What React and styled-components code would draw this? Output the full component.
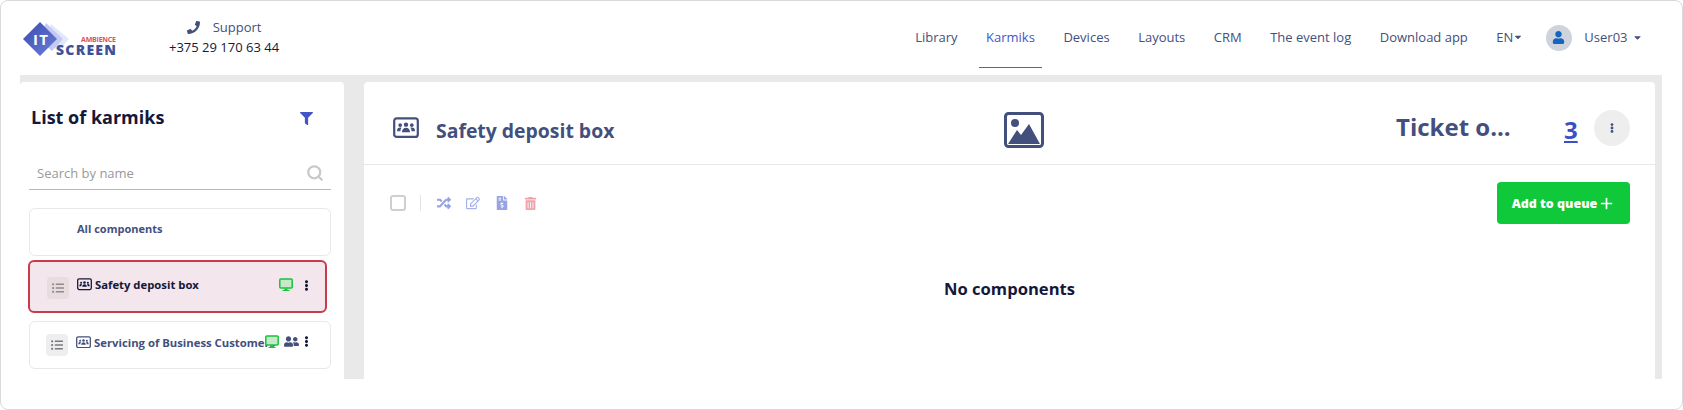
import React from "react";
import styled, { createGlobalStyle } from "styled-components";
import {
  FaPhone, FaFilter, FaRandom, FaRegEdit, FaFileInvoiceDollar, FaTrashAlt,
  FaUserFriends, FaListUl, FaUser, FaEllipsisV, FaCaretDown,
} from "react-icons/fa";
import { FiSearch, FiPlus } from "react-icons/fi";

const navy = "#434f7d";
const ink = "#14183a";
const font = '"Open Sans", "Noto Sans", sans-serif';

const Global = createGlobalStyle`
  html, body { margin: 0; padding: 0; background: #fff; }
  body { font-family: ${font}; color: ${ink}; }
  * { box-sizing: border-box; }
`;

const Logo = () => (
  <LogoSvg viewBox="0 0 96 40" width="96" height="40">
    <defs>
      <linearGradient id="dia" x1="0" y1="0" x2="1" y2="1">
        <stop offset="0" stopColor="#3b4bb0" />
        <stop offset="1" stopColor="#6b7fd8" />
      </linearGradient>
    </defs>
    <path d="M29 3 L47 18 L36 30 L22 18 Z" fill="#e3e7fa" />
    <path d="M24 2 L41 18 L30 30 L16 18 Z" fill="#c3cbf2" />
    <path d="M18 1 L35 18 L18 35 L1 18 Z" fill="url(#dia)" />
    <text x="11" y="24" fontSize="15" fontWeight="700" fill="#fff" fontFamily="Open Sans" textLength="15">IT</text>
    <text x="59" y="21" fontSize="7" fontWeight="700" fill="#d9505f" fontFamily="Open Sans" textLength="35">AMBIENCE</text>
    <text x="34" y="34" fontSize="14" fontWeight="800" fill="#3f5199" fontFamily="Open Sans" textLength="60">SCREEN</text>
  </LogoSvg>
);

const BoardIcon = ({ size = 15, color = navy }) => (
  <svg width={size} height={size * 0.82} viewBox="0 0 26 21" fill="none">
    <rect x="1.2" y="1.2" width="23.6" height="18.6" rx="2.5" stroke={color} strokeWidth="2.2" />
    <circle cx="13" cy="7.5" r="2.2" fill={color} />
    <circle cx="7.2" cy="8" r="1.8" fill={color} />
    <circle cx="18.8" cy="8" r="1.8" fill={color} />
    <path d="M9 15c0-3 1.6-4.5 4-4.5s4 1.500 4 4.500z" fill={color} />
    <path d="M4 14c0-2.500 1.200-3.600 3.200-3.600.6 0 1 .1 1.400.3C7.800 11.600 7.500 12.700 7.500 14zM22 14c0-2.500-1.200-3.600-3.200-3.600-.6 0-1 .1-1.400.3.800.9 1.100 2 1.100 3.300z" fill={color} />
  </svg>
);

const MonitorIcon = () => (
  <svg width="14" height="14" viewBox="0 0 14 14" fill="none">
    <rect x="0.8" y="1" width="12.4" height="9" rx="1" fill="#c9e8cb" stroke="#17c43a" strokeWidth="1.5" />
    <path d="M5.500 10.500h3v1.500h2v1H3.500v-1h2z" fill="#17c43a" />
  </svg>
);

const PictureIcon = () => (
  <svg width="40" height="36" viewBox="0 0 40 36" fill="none">
    <rect x="1.500" y="1.500" width="37" height="33" rx="3" fill="#fff" stroke={navy} strokeWidth="3" />
    <circle cx="11" cy="11" r="4" fill={navy} />
    <path d="M4 32 L13 18 L17 23 L25 12 L36 32 Z" fill={navy} />
  </svg>
);

const cards = [
  { id: 1, name: "Safety deposit box", active: true },
  { id: 2, name: "Servicing of Business Customers", users: true },
];

const navItems = ["Library", "Karmiks", "Devices", "Layouts", "CRM", "The event log", "Download app"];

export default function App() {
  return (
    <Frame>
      <Global />
      <Header>
        <Logo />
        <Support>
          <SupportRow>
            <PhoneIcon />
            <span>Support</span>
          </SupportRow>
          <PhoneNumber>+375 29 170 63 44</PhoneNumber>
        </Support>
        <Nav>
          {navItems.map((item) => (
            <NavItem key={item} $active={item === "Karmiks"}>{item}</NavItem>
          ))}
          <Lang>EN<FaCaretDown size={10} /></Lang>
          <Avatar><FaUser size={13} color="#1565c0" /></Avatar>
          <UserName>User03</UserName>
          <UserCaret size={11} color={navy} />
        </Nav>
      </Header>
      <Workspace>
        <Sidebar>
          <SideTitleRow>
            <SideTitle>List of karmiks</SideTitle>
            <FilterIcon size={13} color="#4355c7" />
          </SideTitleRow>
          <SearchBox>
            <SearchInput placeholder="Search by name" />
            <FiSearch size={18} color="#c8c8c8" strokeWidth={3} />
          </SearchBox>
          <AllCard>All components</AllCard>
          {cards.map((card) => (
            <Card key={card.id} $active={card.active}>
              <Handle $active={card.active}>
                <FaListUl size={12} color={card.active ? "#8f8a8f" : "#77797f"} />
              </Handle>
              <BoardIcon color={card.active ? ink : navy} />
              <CardName $active={card.active}>{card.name}</CardName>
              <CardIcons $wide={card.users}>
                <MonitorIcon />
                {card.users && <FaUserFriends size={15} color={navy} />}
                <Dots $wide={card.users}><FaEllipsisV size={11} color={ink} /></Dots>
              </CardIcons>
            </Card>
          ))}
        </Sidebar>
        <Main>
          <MainHead>
            <TitleBlock>
              <BoardIcon size={26} />
              <Title>Safety deposit box</Title>
            </TitleBlock>
            <ImageSlot><PictureIcon /></ImageSlot>
            <Ticket>Ticket o...</Ticket>
            <Count href="#">3</Count>
            <RoundButton><FaEllipsisV size={10} color={navy} /></RoundButton>
          </MainHead>
          <Toolbar>
            <Check />
            <Divider />
            <ToolIcons>
              <FaRandom size={14} color="#98a3e2" />
              <FaRegEdit size={14} color="#a9b2e8" />
              <FaFileInvoiceDollar size={14} color="#98a3e2" />
              <FaTrashAlt size={13} color="#f2a0aa" />
            </ToolIcons>
            <AddButton>Add to queue <FiPlus size={17} strokeWidth={2.4} /></AddButton>
          </Toolbar>
          <Empty>No components</Empty>
        </Main>
      </Workspace>
    </Frame>
  );
}

const Frame = styled.div`
  width: 1683px;
  height: 410px;
  border: 1px solid #d9d9d9;
  border-radius: 8px;
  overflow: hidden;
  background: #fff;
`;

const Header = styled.header`
  height: 74px;
  display: flex;
  align-items: flex-start;
  padding: 0 39px 0 21px;
`;

const LogoSvg = styled.svg`
  margin-top: 20px;
  flex: none;
`;

const Support = styled.div`
  margin-left: 51px;
  margin-top: 16px;
  display: flex;
  flex-direction: column;
  align-items: center;
`;

const SupportRow = styled.div`
  display: flex;
  align-items: center;
  gap: 13px;
  font-size: 13px;
  line-height: 20px;
  color: ${navy};
`;

const PhoneIcon = styled(FaPhone)`
  width: 13px;
  height: 13px;
  color: ${navy};
`;

const PhoneNumber = styled.div`
  font-size: 13px;
  line-height: 20px;
  color: ${ink};
`;

const Nav = styled.nav`
  margin-left: auto;
  height: 67px;
  display: flex;
  align-items: center;
  gap: 14.5px;
  font-size: 13px;
  color: ${navy};
`;

const NavItem = styled.a`
  height: 67px;
  padding: 5px 7px 0;
  display: flex;
  align-items: center;
  color: ${(p) => (p.$active ? "#4355c7" : navy)};
  border-bottom: 1px solid ${(p) => (p.$active ? "#c93a4b" : "transparent")};
`;

const Lang = styled.div`
  margin: 5px 0 0 7px;
  display: flex;
  align-items: center;
`;

const Avatar = styled.div`
  width: 26px;
  height: 26px;
  margin: 6px 0 0 8px;
  border-radius: 50%;
  background: #cfd3dc;
  display: flex;
  align-items: center;
  justify-content: center;
`;

const UserName = styled.span`
  margin: 5px -10px 0 -2px;
`;

const UserCaret = styled(FaCaretDown)`
  margin-top: 5px;
`;

const Workspace = styled.div`
  height: 304px;
  margin: 0 20px 0 19px;
  padding: 7px 7px 0 0;
  background: #e9e9e9;
  display: flex;
  gap: 20px;
`;

const Sidebar = styled.aside`
  width: 324px;
  background: #fff;
  border-radius: 4px 4px 0 0;
  padding: 0 13px 0 9px;
  overflow: hidden;
`;

const SideTitleRow = styled.div`
  height: 69px;
  padding: 0 18px 0 2px;
  display: flex;
  align-items: center;
  justify-content: space-between;
`;

const FilterIcon = styled(FaFilter)`
  margin-top: 4px;
`;

const SideTitle = styled.h2`
  margin: 0;
  font-size: 18px;
  font-weight: 700;
  color: ${ink};
`;

const SearchBox = styled.div`
  height: 39px;
  padding: 6px 7px 0 8px;
  display: flex;
  align-items: center;
  justify-content: space-between;
  border-bottom: 1px solid #b9b9b9;
`;

const SearchInput = styled.input`
  border: 0;
  outline: 0;
  padding: 0;
  font: 13px ${font};
  color: ${navy};
  &::placeholder { color: #999; opacity: 1; }
`;

const AllCard = styled.div`
  height: 48px;
  margin-top: 18px;
  padding: 12px 47px;
  border: 1px solid #e8e8e8;
  border-radius: 6px;
  font-size: 11px;
  line-height: 16px;
  font-weight: 700;
  color: ${navy};
`;

const Card = styled.div`
  position: relative;
  width: ${(p) => (p.$active ? "299px" : "302px")};
  height: ${(p) => (p.$active ? "53px" : "48px")};
  margin-top: ${(p) => (p.$active ? "4px" : "8px")};
  margin-left: ${(p) => (p.$active ? "-1px" : "0")};
  padding: ${(p) => (p.$active ? "0 0 4px 17px" : "0 0 6px 16px")};
  display: flex;
  align-items: center;
  background: ${(p) => (p.$active ? "#f3e6ec" : "#fff")};
  border: ${(p) => (p.$active ? "2px solid #c93a4b" : "1px solid #e8e8e8")};
  border-radius: 6px;
`;

const Handle = styled.div`
  width: 22px;
  height: 22px;
  margin-right: 8px;
  flex: none;
  border-radius: 4px;
  background: ${(p) => (p.$active ? "#e8dcdf" : "#eeeeee")};
  display: flex;
  align-items: center;
  justify-content: center;
  transform: translateY(3px);
`;

const CardName = styled.div`
  margin-left: 3px;
  max-width: 186px;
  overflow: hidden;
  font-size: 11.3px;
  font-weight: 700;
  white-space: nowrap;
  color: ${(p) => (p.$active ? ink : navy)};
`;

const CardIcons = styled.div`
  position: absolute;
  top: ${(p) => (p.$wide ? "12px" : "16px")};
  right: ${(p) => (p.$wide ? "18px" : "13px")};
  display: flex;
  align-items: center;
  gap: 5px;
`;

const Dots = styled.span`
  display: flex;
  margin-left: ${(p) => (p.$wide ? "-3px" : "3px")};
`;

const Main = styled.main`
  flex: 1;
  background: #fff;
  border-radius: 4px 4px 0 0;
  display: flex;
  flex-direction: column;
`;

const MainHead = styled.div`
  height: 83px;
  padding: 10px 25px 0 29px;
  display: flex;
  align-items: center;
  border-bottom: 1px solid #e8e8e8;
`;

const TitleBlock = styled.div`
  width: 611px;
  display: flex;
  align-items: center;
  gap: 17px;
`;

const Title = styled.h1`
  margin: 4px 0 0;
  font-size: 19.4px;
  font-weight: 700;
  color: ${navy};
`;

const ImageSlot = styled.div`
  width: 392px;
  margin-top: 3px;
  display: flex;
`;

const Ticket = styled.div`
  width: 168px;
  margin-top: -3px;
  font-size: 24px;
  font-weight: 700;
  color: ${navy};
`;

const Count = styled.a`
  width: 30px;
  margin-top: 3px;
  font-size: 24px;
  font-weight: 700;
  color: #3a50c8;
  text-decoration: underline;
`;

const RoundButton = styled.button`
  width: 36px;
  height: 36px;
  border: 0;
  border-radius: 50%;
  background: #eeeeee;
  display: flex;
  align-items: center;
  justify-content: center;
`;

const Toolbar = styled.div`
  padding: 17px 25px 0 26px;
  display: flex;
  align-items: flex-start;
`;

const Check = styled.div`
  width: 16px;
  height: 16px;
  margin-top: 13px;
  border: 2px solid #cfcfcf;
  border-radius: 3px;
`;

const Divider = styled.div`
  width: 1px;
  height: 16px;
  margin: 13px 0 0 14px;
  background: #e4e4e4;
`;

const ToolIcons = styled.div`
  margin: 14px 0 0 16px;
  display: flex;
  align-items: center;
  gap: 15px;
`;

const AddButton = styled.button`
  width: 133px;
  height: 42px;
  margin-left: auto;
  border: 0;
  border-radius: 4px;
  background: #0fc93a;
  color: #fff;
  font: 800 12.5px ${font};
  display: flex;
  align-items: center;
  justify-content: center;
  gap: 1px;
`;

const Empty = styled.div`
  margin-top: 53px;
  text-align: center;
  font-size: 16.6px;
  font-weight: 700;
  color: ${ink};
`;
